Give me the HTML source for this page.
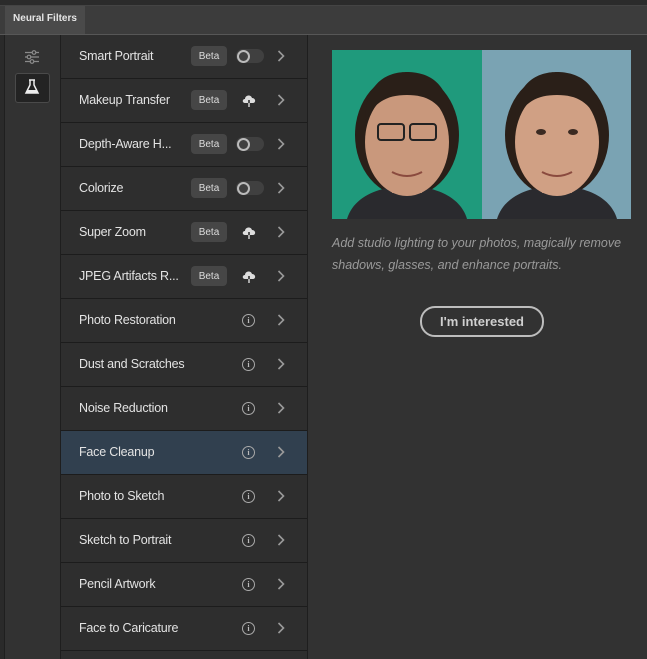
<!DOCTYPE html>
<html><head><style>
body{margin:0;width:647px;height:659px;background:#323232;font-family:"Liberation Sans",sans-serif;position:relative;overflow:hidden}
.top{position:absolute;left:0;top:0;width:647px;height:5px;background:#2b2b2b;border-bottom:1px solid #444}
.tabbar{position:absolute;left:0;top:6px;width:647px;height:28px;background:#3c3c3c;border-bottom:1px solid #575757}
.tab{position:absolute;left:5px;top:0;width:80px;height:28px;background:#4a4a4a;color:#e6e6e6;font-size:10px;font-weight:bold;line-height:26px;text-align:center}
.lstrip{position:absolute;left:0;top:35px;width:4px;height:624px;background:#2a2a2a;border-right:1px solid #1f1f1f}
.tool{position:absolute;left:5px;top:35px;width:55px;height:624px;background:#323232;border-right:1px solid #1e1e1e}
.list{position:absolute;left:61px;top:35px;width:246px;height:624px;background:#2e2e2e;border-right:1px solid #1e1e1e}
.row{position:absolute;left:0;width:246px;height:43px;border-bottom:1px solid #1c1c1c;color:#e3e3e3;font-size:12.5px}
.row .t{position:absolute;left:18px;top:14px;letter-spacing:-0.2px}
.beta{position:absolute;left:130px;top:11px;width:36px;height:20px;background:#464646;border-radius:4px;color:#ddd;font-size:10px;display:flex;align-items:center;justify-content:center}
.tog{position:absolute;left:175px;top:14px;width:28px;height:14px;background:#404040;border-radius:7px}
.tog:before{content:"";position:absolute;left:1px;top:1px;width:9px;height:9px;border:2px solid #bbb;border-radius:50%}
.chev{position:absolute;left:216px;top:14px;width:8px;height:14px}
.info{position:absolute;left:181px;top:15px;width:11px;height:11px;border:1.3px solid #aaa;border-radius:50%;color:#bbb;font-size:8px;font-weight:bold;text-align:center;line-height:11px;font-family:"Liberation Serif",serif}
.cloud{position:absolute;left:180px;top:15px}
.right{position:absolute;left:308px;top:35px;width:339px;height:624px;background:#323232}
.desc{position:absolute;left:332px;top:232px;width:310px;color:#9a9a9a;font-size:12.5px;font-style:italic;line-height:22px}
.btn{position:absolute;left:420px;top:306px;width:120px;height:27px;border:2px solid #bdbdbd;border-radius:15px;color:#cfcfcf;font-size:13px;font-weight:bold;text-align:center;line-height:27px}
</style></head><body>
<div class="top"></div>
<div class="tabbar"><div class="tab">Neural Filters</div></div>
<div class="lstrip"></div>
<div class="tool">
<svg style="position:absolute;left:19px;top:15px" width="16" height="14" viewBox="0 0 16 14" stroke="#8a8a8a" fill="none" stroke-width="1.2"><path d="M1 2.5H15M1 7H15M1 11.5H15"/><circle cx="10" cy="2.5" r="1.8" fill="#323232"/><circle cx="5" cy="7" r="1.8" fill="#323232"/><circle cx="8" cy="11.5" r="1.8" fill="#323232"/></svg>
<div style="position:absolute;left:10px;top:38px;width:33px;height:28px;background:#232323;border:1px solid #4a4a4a;border-radius:3px"></div>
<svg style="position:absolute;left:19px;top:44px" width="16" height="16" viewBox="0 0 16 16"><path d="M5 1H11M6 1V6L2 14H14L10 6V1" stroke="#eee" stroke-width="1.5" fill="none"/><path d="M3.5 11H12.5L14 14H2Z" fill="#eee"/></svg>
</div>
<div class="list">
<div class="row" style="top:0"><span class="t">Smart Portrait</span><div class="beta">Beta</div><div class="tog"></div><svg class="chev" viewBox="0 0 8 14"><path d="M1.5 2L6.5 7L1.5 12" stroke="#999" stroke-width="1.6" fill="none"/></svg></div>
<div class="row" style="top:44px"><span class="t">Makeup Transfer</span><div class="beta">Beta</div><svg class="cloud" width="16" height="14" viewBox="0 0 16 14"><path d="M4 9C1 9 1 5 4 5C4 1 10 0 11 4C15 4 15 9 12 9Z" fill="#ddd"/><path d="M8 6V13M5.5 10.5L8 13L10.5 10.5" stroke="#2e2e2e" stroke-width="1.6" fill="none"/><path d="M8 9V13" stroke="#ddd" stroke-width="1.4"/></svg><svg class="chev" viewBox="0 0 8 14"><path d="M1.5 2L6.5 7L1.5 12" stroke="#999" stroke-width="1.6" fill="none"/></svg></div>
<div class="row" style="top:88px"><span class="t">Depth-Aware H...</span><div class="beta">Beta</div><div class="tog"></div><svg class="chev" viewBox="0 0 8 14"><path d="M1.5 2L6.5 7L1.5 12" stroke="#999" stroke-width="1.6" fill="none"/></svg></div>
<div class="row" style="top:132px"><span class="t">Colorize</span><div class="beta">Beta</div><div class="tog"></div><svg class="chev" viewBox="0 0 8 14"><path d="M1.5 2L6.5 7L1.5 12" stroke="#999" stroke-width="1.6" fill="none"/></svg></div>
<div class="row" style="top:176px"><span class="t">Super Zoom</span><div class="beta">Beta</div><svg class="cloud" width="16" height="14" viewBox="0 0 16 14"><path d="M4 9C1 9 1 5 4 5C4 1 10 0 11 4C15 4 15 9 12 9Z" fill="#ddd"/><path d="M8 6V13M5.5 10.5L8 13L10.5 10.5" stroke="#2e2e2e" stroke-width="1.6" fill="none"/><path d="M8 9V13" stroke="#ddd" stroke-width="1.4"/></svg><svg class="chev" viewBox="0 0 8 14"><path d="M1.5 2L6.5 7L1.5 12" stroke="#999" stroke-width="1.6" fill="none"/></svg></div>
<div class="row" style="top:220px"><span class="t">JPEG Artifacts R...</span><div class="beta">Beta</div><svg class="cloud" width="16" height="14" viewBox="0 0 16 14"><path d="M4 9C1 9 1 5 4 5C4 1 10 0 11 4C15 4 15 9 12 9Z" fill="#ddd"/><path d="M8 6V13M5.5 10.5L8 13L10.5 10.5" stroke="#2e2e2e" stroke-width="1.6" fill="none"/><path d="M8 9V13" stroke="#ddd" stroke-width="1.4"/></svg><svg class="chev" viewBox="0 0 8 14"><path d="M1.5 2L6.5 7L1.5 12" stroke="#999" stroke-width="1.6" fill="none"/></svg></div>
<div class="row" style="top:264px"><span class="t">Photo Restoration</span><div class="info">i</div><svg class="chev" viewBox="0 0 8 14"><path d="M1.5 2L6.5 7L1.5 12" stroke="#999" stroke-width="1.6" fill="none"/></svg></div>
<div class="row" style="top:308px"><span class="t">Dust and Scratches</span><div class="info">i</div><svg class="chev" viewBox="0 0 8 14"><path d="M1.5 2L6.5 7L1.5 12" stroke="#999" stroke-width="1.6" fill="none"/></svg></div>
<div class="row" style="top:352px"><span class="t">Noise Reduction</span><div class="info">i</div><svg class="chev" viewBox="0 0 8 14"><path d="M1.5 2L6.5 7L1.5 12" stroke="#999" stroke-width="1.6" fill="none"/></svg></div>
<div class="row" style="top:396px;background:#31404f"><span class="t">Face Cleanup</span><div class="info">i</div><svg class="chev" viewBox="0 0 8 14"><path d="M1.5 2L6.5 7L1.5 12" stroke="#999" stroke-width="1.6" fill="none"/></svg></div>
<div class="row" style="top:440px"><span class="t">Photo to Sketch</span><div class="info">i</div><svg class="chev" viewBox="0 0 8 14"><path d="M1.5 2L6.5 7L1.5 12" stroke="#999" stroke-width="1.6" fill="none"/></svg></div>
<div class="row" style="top:484px"><span class="t">Sketch to Portrait</span><div class="info">i</div><svg class="chev" viewBox="0 0 8 14"><path d="M1.5 2L6.5 7L1.5 12" stroke="#999" stroke-width="1.6" fill="none"/></svg></div>
<div class="row" style="top:528px"><span class="t">Pencil Artwork</span><div class="info">i</div><svg class="chev" viewBox="0 0 8 14"><path d="M1.5 2L6.5 7L1.5 12" stroke="#999" stroke-width="1.6" fill="none"/></svg></div>
<div class="row" style="top:572px"><span class="t">Face to Caricature</span><div class="info">i</div><svg class="chev" viewBox="0 0 8 14"><path d="M1.5 2L6.5 7L1.5 12" stroke="#999" stroke-width="1.6" fill="none"/></svg></div>
</div>
<div class="right"></div>
<svg style="position:absolute;left:332px;top:50px" width="299" height="169" viewBox="0 0 299 169">
<rect x="0" y="0" width="150" height="169" fill="#1f9a7c"/>
<rect x="150" y="0" width="149" height="169" fill="#7aa3b3"/>
<g>
<ellipse cx="75" cy="85" rx="52" ry="62" fill="#2a1f18"/>
<path d="M15 169C22 145 50 136 75 136C100 136 128 145 135 169Z" fill="#2a2a2e"/>
<rect x="60" y="118" width="30" height="25" fill="#b98468"/>
<ellipse cx="75" cy="92" rx="42" ry="54" fill="#c9987c"/>
<path d="M33 72C33 28 60 22 75 22C95 22 120 32 117 74C108 52 95 45 75 45C55 45 42 52 33 72Z" fill="#2a1f18"/>
<rect x="46" y="74" width="26" height="16" rx="3" fill="none" stroke="#222" stroke-width="2"/>
<rect x="78" y="74" width="26" height="16" rx="3" fill="none" stroke="#222" stroke-width="2"/>
<path d="M60 122Q75 130 90 122" stroke="#8a4a3e" stroke-width="2" fill="none"/>
</g>
<g transform="translate(150 0)">
<ellipse cx="75" cy="85" rx="52" ry="62" fill="#2a1f18"/>
<path d="M15 169C22 145 50 136 75 136C100 136 128 145 135 169Z" fill="#2a2a2e"/>
<rect x="60" y="118" width="30" height="25" fill="#b98468"/>
<ellipse cx="75" cy="92" rx="42" ry="54" fill="#d0a084"/>
<path d="M33 72C33 28 60 22 75 22C95 22 120 32 117 74C108 52 95 45 75 45C55 45 42 52 33 72Z" fill="#2a1f18"/>
<ellipse cx="59" cy="82" rx="5" ry="3" fill="#3a2a22"/><ellipse cx="91" cy="82" rx="5" ry="3" fill="#3a2a22"/>
<path d="M60 122Q75 130 90 122" stroke="#8a4a3e" stroke-width="2" fill="none"/>
</g>
</svg>
<div class="desc">Add studio lighting to your photos, magically remove shadows, glasses, and enhance portraits.</div>
<div class="btn">I'm interested</div>
</body></html>
